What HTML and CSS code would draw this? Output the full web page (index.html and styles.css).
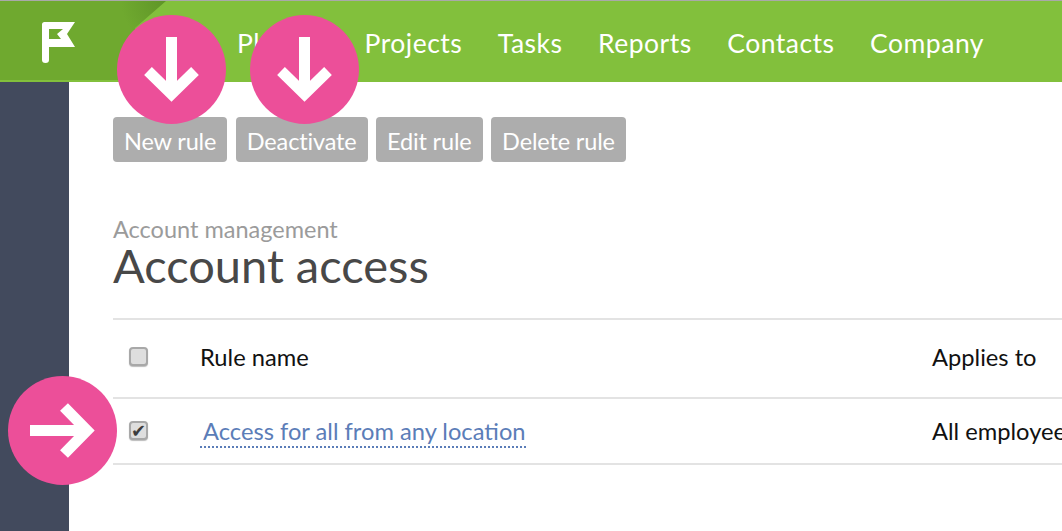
FILE: index.html
```html
<!DOCTYPE html>
<html lang="en">
<head>
<meta charset="utf-8">
<title>Account access</title>
<link rel="stylesheet" href="styles.css">
</head>
<body>
<header class="topbar">
  <a class="logo" href="#"></a>
  <svg class="flag" width="34" height="42" viewBox="0 0 34 42"><path fill-rule="evenodd" d="M0 2.500Q0 0 2.500 0H33L25 12L33 25H7V38Q7 41 3.500 41Q0 41 0 38ZM7 7V17H19L15 12L21 7Z" fill="#fff"/></svg>
  <nav class="nav">
    <a href="#">Planner</a>
    <a href="#">Projects</a>
    <a href="#">Tasks</a>
    <a href="#">Reports</a>
    <a href="#">Contacts</a>
    <a href="#">Company</a>
  </nav>
</header>
<div class="body">
  <aside class="sidebar"></aside>
  <main class="main">
    <div class="actions">
      <button class="btn">New rule</button>
      <button class="btn">Deactivate</button>
      <button class="btn">Edit rule</button>
      <button class="btn">Delete rule</button>
    </div>
    <p class="crumb">Account management</p>
    <h1 class="title">Account access</h1>
    <div class="table">
      <div class="row head">
        <div class="c-check"><input type="checkbox"></div>
        <div class="c-name">Rule name</div>
        <div class="c-applies">Applies to</div>
      </div>
      <div class="row item">
        <div class="c-check"><input type="checkbox" checked></div>
        <div class="c-name"><a href="#">Access for all from any location</a></div>
        <div class="c-applies">All employees</div>
      </div>
    </div>
  </main>
</div>
<div class="pin pin-a"><svg width="109" height="109" viewBox="0 0 109 109"><path d="M54.500 22V79M31 56L54.500 79L78 56" fill="none" stroke="#fff" stroke-width="11"/></svg></div>
<div class="pin pin-b"><svg width="109" height="109" viewBox="0 0 109 109"><path d="M54.500 22V79M31 56L54.500 79L78 56" fill="none" stroke="#fff" stroke-width="11"/></svg></div>
<div class="pin pin-c"><svg width="109" height="109" viewBox="0 0 109 109"><path d="M22 54.500H79M56 31L79 54.500L56 78" fill="none" stroke="#fff" stroke-width="11"/></svg></div>
</body>
</html>
```
FILE: styles.css
```css
* { box-sizing: border-box; }
html, body { margin: 0; height: 531px; overflow: hidden; background: #fff; font-family: "Lato", sans-serif; }
.topbar { height: 82px; display: flex; background: #82c03c; border-top: 1px solid #a9a9a9; position: relative; }
.logo { position: absolute; left: 0; top: 0; width: 166px; height: 79px; background: radial-gradient(circle at 166px 0, #5f9527 0, #6fa92f 45px); clip-path: polygon(0 0, 100% 0, 135px 27px, 135px 100%, 0 100%); }
.flag { position: absolute; left: 42px; top: 21px; }
.nav { display: flex; gap: 35.500px; margin-left: 237px; padding-top: 2px; align-items: center; }
.nav a { color: #fff; font-size: 26.500px; letter-spacing: .5px; text-decoration: none; }
.body { display: flex; height: 449px; }
.sidebar { width: 69px; background: #424a5d; }
.main { flex: 1; padding: 35px 0 0 44px; min-width: 0; overflow: hidden; }
.actions { display: flex; gap: 8.500px; }
.btn { height: 45px; padding: 2px 11px 0; border: 0; border-radius: 4px; background: #adadad; color: #fff; font: 23.500px "Lato", sans-serif; letter-spacing: -.15px; }
.crumb { margin: 53px 0 0; color: #9b9b9b; font-size: 23.500px; line-height: 28px; }
.title { margin: -1px 0 0; color: #484848; font-weight: 400; font-size: 47px; line-height: 47px; }
.table { margin-top: 29px; border-top: 2px solid #e3e3e3; width: 1100px; }
.row { display: flex; align-items: center; border-bottom: 2px solid #e3e3e3; color: #111; font-size: 23.700px; }
.head { height: 79px; padding-bottom: 4px; }
.item { height: 66px; }
.item .c-check { padding-bottom: 2px; }
.c-check { width: 87px; padding-left: 16px; }
.c-check input { appearance: none; position: relative; width: 19px; height: 19px; margin: 0; display: block; background: #dedede; border: 2px solid #a8a8a8; border-radius: 4px; box-shadow: 0 1px 1px #bbb; }
.c-check input:checked::before { content: "\2714"; position: absolute; left: 0; top: 0; width: 15px; height: 15px; font: 18px/15px "DejaVu Sans", sans-serif; text-align: center; color: #3d3d3d; }
.c-name { width: 732px; }
.c-name a { color: #5b7db8; text-decoration: none; border-bottom: 2px dotted #5b7db8; padding: 0 0 1px 3px; }
.pin { position: absolute; width: 109px; height: 109px; border-radius: 50%; background: #ec4f99; }
.pin svg { display: block; }
.pin-a { left: 117px; top: 15px; }
.pin-b { left: 250px; top: 15px; }
.pin-c { left: 8px; top: 376px; }
```
